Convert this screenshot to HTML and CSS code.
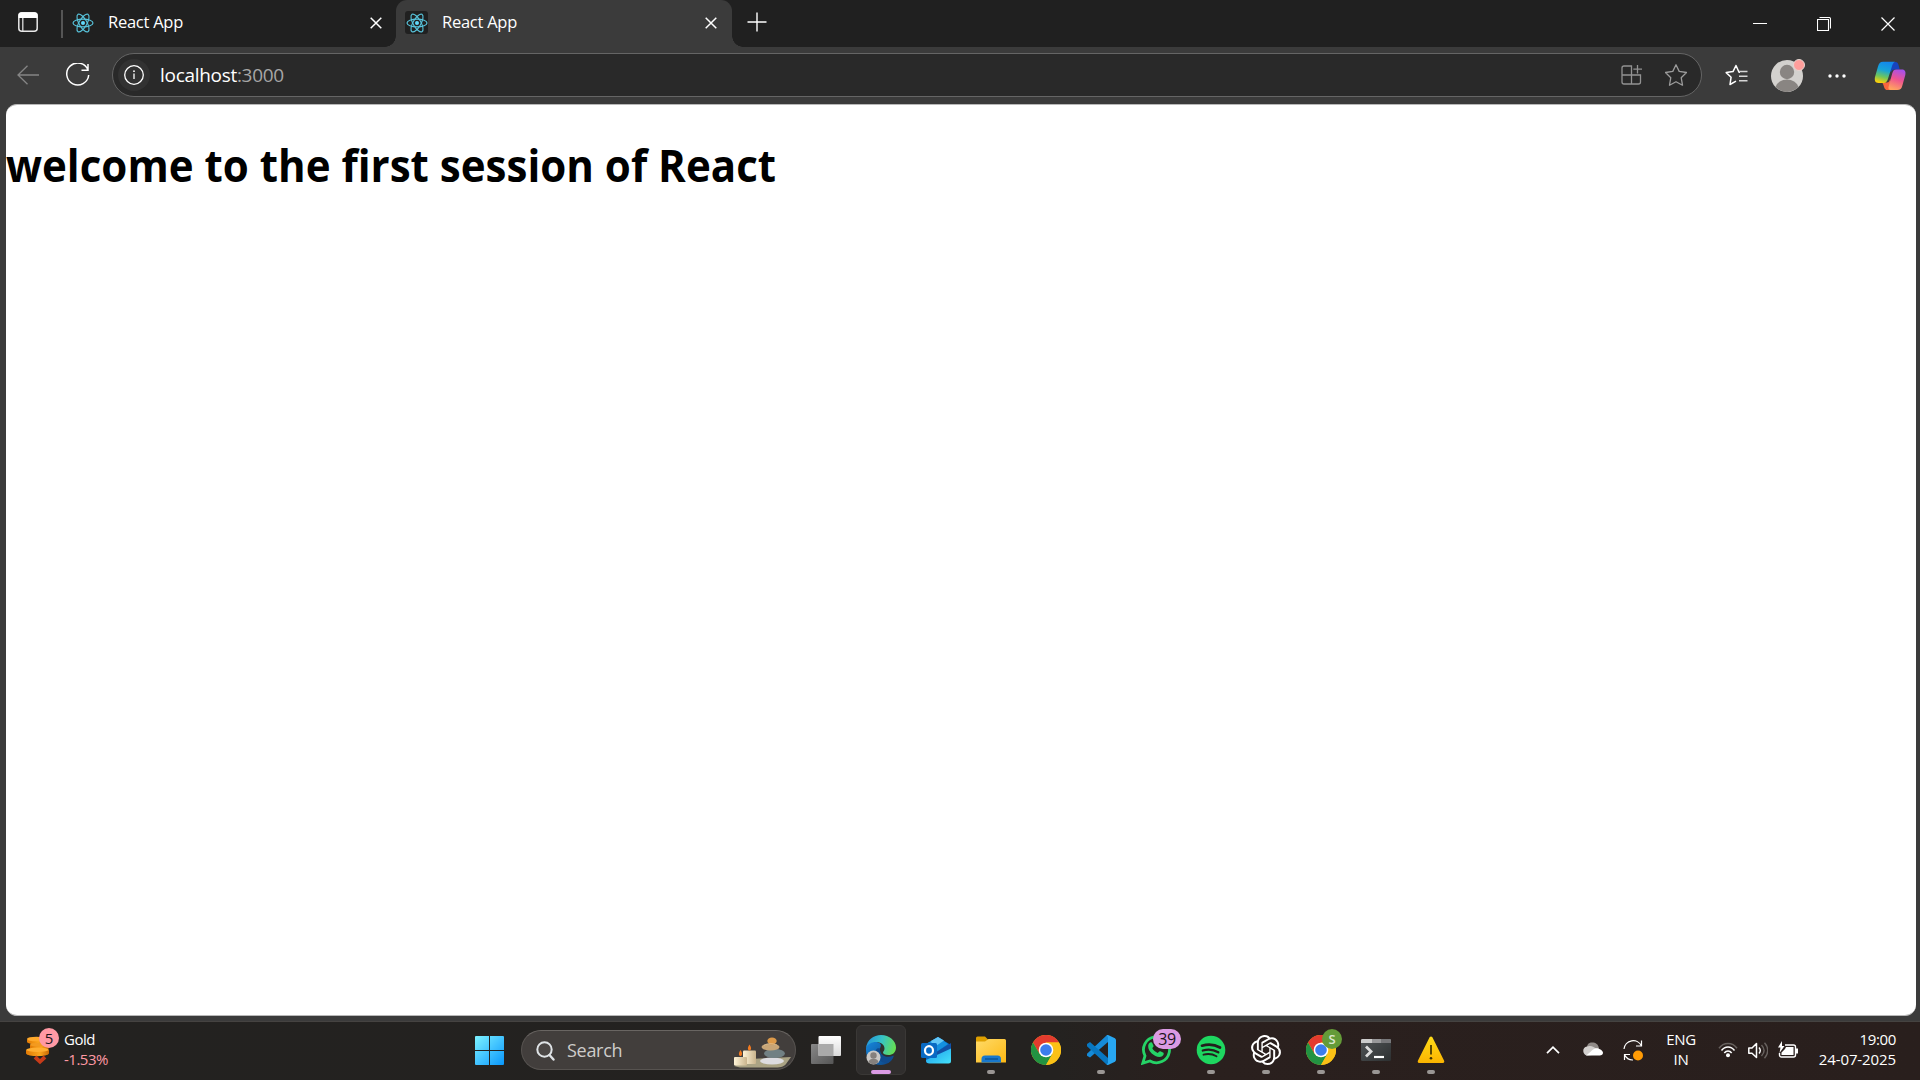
FILE: index.html
```html
<!DOCTYPE html>
<html lang="en">
<head>
<meta charset="utf-8">
<title>React App</title>
<link rel="stylesheet" href="styles.css">
</head>
<body>
<svg class="defs" width="0" height="0">
  <defs>
    <symbol id="react" viewBox="0 0 22 22">
      <g fill="none" stroke="#58c4dc" stroke-width="1.15">
        <ellipse cx="11" cy="11" rx="10" ry="3.9"/>
        <ellipse cx="11" cy="11" rx="10" ry="3.9" transform="rotate(60 11 11)"/>
        <ellipse cx="11" cy="11" rx="10" ry="3.9" transform="rotate(120 11 11)"/>
      </g>
      <circle cx="11" cy="11" r="2" fill="#61dafb"/>
    </symbol>
    <symbol id="close" viewBox="0 0 12 12"><path d="M.7.7l10.6 10.6M11.3.7L.7 11.3" fill="none" stroke="#fff" stroke-width="1.5"/></symbol>
    <symbol id="chrome" viewBox="0 0 30 30">
      <circle cx="15" cy="15" r="15" fill="#fbc116"/>
      <path d="M2 7.5A15 15 0 0 1 28 7.5H15L8.5 18.8z" fill="#e33b2e"/>
      <path d="M2 7.5A15 15 0 0 0 15 30L21.5 18.8 15 22 8.5 18.8z" fill="#229342"/>
      <path d="M28 7.5A15 15 0 0 1 15 30L21.5 18.8V11L15 7.5z" fill="#fbc116"/>
      <circle cx="15" cy="15" r="7.3" fill="#fff"/><circle cx="15" cy="15" r="5.8" fill="#3b7ded"/>
    </symbol>
    <linearGradient id="win" x2="1" y2="1"><stop stop-color="#7df3ff"/><stop offset=".5" stop-color="#43c4ff"/><stop offset="1" stop-color="#0997fb"/></linearGradient>
    <linearGradient id="edgeTop" x1="0" y1=".3" x2="1" y2=".5"><stop stop-color="#2395dd"/><stop offset=".5" stop-color="#37c3c5"/><stop offset="1" stop-color="#65de52"/></linearGradient>
    <linearGradient id="edgeBase" x2="1" y2="1"><stop stop-color="#1687dc"/><stop offset="1" stop-color="#0c4282"/></linearGradient>
    <linearGradient id="folder" x2="1" y2="1"><stop stop-color="#ffda68"/><stop offset="1" stop-color="#fdb914"/></linearGradient>
    <linearGradient id="outlook" x2="1" y2="1"><stop stop-color="#1c9bea"/><stop offset="1" stop-color="#45e2fb"/></linearGradient>
    <linearGradient id="copBlue" x1=".6" y1="0" x2=".35" y2="1"><stop stop-color="#1387ed"/><stop offset=".4" stop-color="#17a4d8"/><stop offset=".72" stop-color="#70c65b"/><stop offset="1" stop-color="#fbd00c"/></linearGradient>
    <linearGradient id="copPink" x1=".7" y1="0" x2=".4" y2="1"><stop stop-color="#a550ed"/><stop offset=".5" stop-color="#ef5490"/><stop offset="1" stop-color="#ffa260"/></linearGradient>
    <linearGradient id="gold"><stop stop-color="#e17a05"/><stop offset=".6" stop-color="#fba51d"/><stop offset="1" stop-color="#c96905"/></linearGradient>
    <linearGradient id="glass" x2="0" y2="1"><stop stop-color="#fff"/><stop offset="1" stop-color="#dadada"/></linearGradient>
    <linearGradient id="pane" x2="1" y2="1"><stop stop-color="#888"/><stop offset="1" stop-color="#555"/></linearGradient>
    <linearGradient id="warn" x2="0" y2="1"><stop stop-color="#ffdc19"/><stop offset="1" stop-color="#fbb400"/></linearGradient>
    <linearGradient id="candle"><stop stop-color="#fff4d7"/><stop offset="1" stop-color="#c9b48d"/></linearGradient>
    <linearGradient id="term" x2="1" y2="1"><stop stop-color="#525658"/><stop offset="1" stop-color="#2d3031"/></linearGradient>
  </defs>
</svg>

<div class="tabstrip">
  <svg class="workspaces" width="20" height="20" viewBox="0 0 20 20"><rect x=".8" y=".8" width="18.4" height="18.4" rx="3" fill="none" stroke="#e8e8e8" stroke-width="1.5"/><path d="M.5 6V3.5A3 3 0 0 1 3.500.5h13a3 3 0 0 1 3 3V6z" fill="#fff"/><path d="M4.800 6v13" stroke="#ddd" stroke-width="1.3"/></svg>
  <span class="divider"></span>
  <div class="tab">
    <span class="favicon"><svg width="22" height="22"><use href="#react"/></svg></span>
    <span class="tab-title">React App</span>
    <svg class="tab-close" width="12" height="12"><use href="#close"/></svg>
  </div>
  <div class="tab active">
    <span class="favicon"><svg width="22" height="22"><use href="#react"/></svg></span>
    <span class="tab-title">React App</span>
    <svg class="tab-close" width="12" height="12"><use href="#close"/></svg>
  </div>
  <svg class="new-tab" width="20" height="20"><path d="M10 .5v19M.5 10h19" stroke="#fff" stroke-width="1.4"/></svg>
  <div class="window-controls">
    <svg width="14" height="14"><path d="M0 6.500h14" stroke="#fff"/></svg>
    <svg width="14" height="14"><path d="M.5 2.500h11v11H.5zM2.500.5H12A1.500 1.500 0 0 1 13.500 2v9.500" fill="none" stroke="#fff" stroke-width="1.1"/></svg>
    <svg width="14" height="14"><path d="M.5.5l13 13M13.500.5l-13 13" stroke="#fff" stroke-width="1.2"/></svg>
  </div>
</div>

<div class="toolbar">
  <svg class="back" width="22" height="20"><path d="M22 10H1M10.500.7L1 10l9.500 9.300" fill="none" stroke="#858585" stroke-width="1.3"/></svg>
  <svg class="reload" width="24" height="24"><path d="M22 7A11 11 0 1 0 22.700 12M22 1v6.200h-6.500" fill="none" stroke="#fff" stroke-width="1.5"/></svg>
  <div class="address">
    <span class="site-info"><svg width="20" height="20"><circle cx="10" cy="10" r="9.300" fill="none" stroke="#fff" stroke-width="1.300"/><path d="M10 8.500v5.500" stroke="#fff" stroke-width="1.300"/><circle cx="10" cy="6.200" r=".9" fill="#fff"/></svg></span>
    <span class="url">localhost<span class="port">:3000</span></span>
    <svg class="apps" width="21" height="20"><path d="M10.500 10V1H3A2 2 0 0 0 1 3v14a2 2 0 0 0 2 2h14.500a2 2 0 0 0 2-2v-7zM1 10h9.500v9M16.500 0v8.500M12.300 4.200H21" fill="none" stroke="#929292" stroke-width="1.300"/></svg>
    <svg class="favorite" width="22" height="22" viewBox="0 0 22 22"><path d="M11 .8l3.200 6.600 7.300 1.100-5.300 5.200 1.300 7.500L11 17.700l-6.500 3.500 1.300-7.500L.5 8.500l7.300-1.100z" fill="none" stroke="#9c9c9c" stroke-width="1.300" stroke-linejoin="round"/></svg>
  </div>
  <svg class="favorites" width="23" height="22" viewBox="0 0 23 22"><path d="M15 8.200h-1L11 1.500 8 7.600l-6.800 1 4.900 4.600L5 20.500l6-3.300" fill="none" stroke="#fff" stroke-width="1.500" stroke-linejoin="round"/><path d="M14 7.500h8.500M14 12.300h8.500M14 16.800h8.500" stroke="#d6d6d6" stroke-width="1.500"/></svg>
  <svg class="profile" width="34" height="33" viewBox="0 0 34 33"><circle cx="16" cy="17" r="16" fill="#d3d1ce"/><path d="M4.500 28A12 10.500 0 0 1 27.500 28 16 16 0 0 1 4.500 28z" fill="#898582"/><circle cx="16" cy="13" r="7.200" fill="#898582"/><circle cx="28" cy="6" r="5.500" fill="#ff9e9b" stroke="#e5d6d2"/></svg>
  <svg class="more" width="18" height="4"><circle cx="2" cy="2" r="1.700" fill="#fff"/><circle cx="9" cy="2" r="1.700" fill="#fff"/><circle cx="16" cy="2" r="1.700" fill="#fff"/></svg>
  <svg class="copilot" width="32" height="30" viewBox="0 0 32 30"><path d="M15 1h6.500c2 0 2.600 1.500 3.200 3.500l1 4h-5c-2.400 0-3 1-4 3z" fill="#1744be"/><path d="M8 21.500h5c2 0 2.500-1.500 3.200-3.800l.5 6.800c0 3 1 4.500 4 4.500h-7.500c-2.500 0-3-2.500-3.600-4.500-.5-1.500-.8-2.200-1.600-3z" fill="#f7663d"/><path d="M9 .8h12c-1.700.7-2.500 2.700-3.200 5L14 17.800c-.8 2.700-1.800 4.200-4.200 4.200H4.500C1 22 .4 19 1 16L4 5.500C4.900 2.500 6 .8 9 .8z" fill="url(#copBlue)"/><path d="M22.500 8.500H28c3.200 0 4 2.500 3.300 5.500l-3 10.700c-.8 3-2 4.300-5 4.300h-7c-2.300 0-2-2.200-1.400-4.400l3.300-12c.7-2.500 1.500-4.100 4.300-4.100z" fill="url(#copPink)"/></svg>
</div>

<main class="page"><h1>welcome to the first session of React</h1></main>

<footer class="taskbar">
  <div class="widget">
    <div class="widget-icon">
      <svg width="24" height="30" viewBox="0 0 24 30"><path d="M1 4.500v2.500c1 3 18 3 19 0V4.500z" fill="url(#gold)"/><ellipse cx="10.500" cy="4" rx="9.500" ry="2.300" fill="#ffa92b"/><path d="M4 10v3c1 3 18 3 19 0v-3z" fill="url(#gold)"/><ellipse cx="13.500" cy="9.700" rx="9.500" ry="1.900" fill="#f39a20"/><path d="M0 15v3.500c1 3.500 22 3.500 23 0V15z" fill="url(#gold)"/><ellipse cx="11.500" cy="14.700" rx="11.300" ry="2.200" fill="#ffae31"/><path d="M9 22l5 4.700 5-4.700" fill="none" stroke="#c63b19" stroke-width="3.800"/></svg>
      <span class="badge widget-badge">5</span>
    </div>
    <div class="widget-text"><span class="commodity">Gold</span><span class="change">-1.53%</span></div>
  </div>

  <svg class="start" width="29" height="29" viewBox="0 0 29 29"><path d="M1 0h13v14H0V1a1 1 0 0 1 1-1zM15 0h13a1 1 0 0 1 1 1v13H15zM0 15h14v14H1a1 1 0 0 1-1-1zM15 15h14v13a1 1 0 0 1-1 1H15z" fill="url(#win)"/></svg>

  <div class="search">
    <svg class="lens" width="19" height="20"><circle cx="8.500" cy="8.500" r="7.200" fill="rgba(255,255,255,.05)" stroke="#dfe3e6" stroke-width="2"/><path d="M13.500 14l4 4.500" stroke="#dfe3e6" stroke-width="2.400" stroke-linecap="round"/></svg>
    <span class="search-label">Search</span>
    <svg class="scene" width="58" height="31" viewBox="0 0 58 31"><path d="M1 29L17 22l41-2-5 7c-2 3-7 3.500-12 3.500H7z" fill="#aaa384"/><rect x="10" y="13.500" width="13" height="13.500" rx="1" fill="url(#candle)"/><rect x="1" y="20" width="13" height="8.500" rx="1" fill="url(#candle)"/><path d="M16.500 7.500c3 4 1 6 0 6s-3-2 0-6zM7.500 13c3 4 1 6 0 6s-3-2 0-6z" fill="#f27a20"/><ellipse cx="39" cy="24" rx="12" ry="3.500" fill="#dddce0"/><ellipse cx="41.500" cy="16.500" rx="10.500" ry="4.500" fill="#718083"/><ellipse cx="37.500" cy="10" rx="9" ry="3.600" fill="#c7a577"/><ellipse cx="39" cy="4" rx="4.700" ry="3.500" fill="#dc9a4a"/><path d="M31 8.500c3-2.500 9-2.500 13-.5" fill="none" stroke="#e7d2ab" stroke-opacity=".5"/></svg>
  </div>

  <div class="apps-row">
    <div class="app"><svg width="30" height="28" viewBox="0 0 30 28"><rect y="8" width="22.500" height="20" rx="1" fill="url(#pane)"/><rect x="7.500" width="22.500" height="20" rx="1" fill="url(#glass)"/><path d="M7.500 8h15v12h-15z" fill="#aaa"/></svg></div>
    <div class="app current"><svg width="30" height="30" viewBox="0 0 30 30"><path d="M0 13C1 8 6 6 11 7c4 1 4.500 3 3.500 5-2.500 5 1.500 10.500 7 10.500 3 0 5-1 6-1.500C25 26.500 21 30 15 30 6 30 0 24 0 15z" fill="url(#edgeBase)"/><path d="M0 13C1 5 7.500 0 15 0c8.500 0 15 6 15 12.500 0 5-3.500 7.500-7.500 7.500-3.500 0-5.500-1-5.500-2.500 0-1 1.500-1.500 1.500-4C18.500 9.500 14.500 7 10 7 5 7 1.500 9.500 0 13z" fill="url(#edgeTop)"/><path d="M10 15c-1 8 5 13.500 12 13.300C26 26 28 22 27.500 20.500 21 24 13.500 20.500 14 13.500c-2-.5-3.500 0-4 1.500z" fill="#104b8e"/><circle cx="7.500" cy="22.500" r="7" fill="#cac8c6"/><circle cx="7.500" cy="20.500" r="3.200" fill="#85807d"/><path d="M2.500 27a5.200 4.500 0 0 1 10 0c-2.500 3-7.500 3-10 0z" fill="#85807d"/></svg></div>
    <div class="app"><svg width="30" height="28" viewBox="0 0 30 28"><path d="M5 8L17 1l12 7.500V25a2 2 0 0 1-2 2H7a2 2 0 0 1-2-2z" fill="#0867c1"/><path d="M5 8L17 1l10 7-13 9-9-4z" fill="#1490df"/><path d="M10 5l7-4 6 3.500L12 12z" fill="#62c6f6"/><path d="M14 17L30 7v7L17 23z" fill="#1150a6"/><path d="M30 12.500V25a2.500 2.500 0 0 1-2.500 2.500h-19A3.500 3.500 0 0 1 5 24z" fill="url(#outlook)"/><rect y="7" width="16" height="15" rx="1.500" fill="#096ac4"/><ellipse cx="8" cy="14.500" rx="4" ry="4.400" fill="none" stroke="#fff" stroke-width="2.200"/></svg></div>
    <div class="app open"><svg width="30" height="28" viewBox="0 0 30 28"><path d="M0 8V2a1.500 1.500 0 0 1 1.500-1.500H9L12.500 4v6z" fill="#dfa000"/><path d="M0 5.500h9L12.500 3H28.500A1.500 1.500 0 0 1 30 4.500v22H0z" fill="url(#folder)"/><path d="M5.500 26.500V23A3.500 3.500 0 0 1 9 19.500h12.500A3.500 3.500 0 0 1 25 23v3.500z" fill="#1878cc"/><path d="M9 23h13" stroke="#074f92" stroke-width="1.300"/></svg></div>
    <div class="app"><svg width="30" height="30"><use href="#chrome"/></svg></div>
    <div class="app open"><svg width="30" height="30" viewBox="0 0 30 30"><path d="M22 7L4 22.500 1 20.700v-2L20.500.5 22 0z" fill="#168bd8"/><path d="M22 23L4 7 1 9v2.200L20.500 29.500 22 30z" fill="#0877c1"/><path d="M20.500.3L22 0l7 3.300 1 1.500v20.400l-1 1.500L22 30l-1.500-.5L22 28V2z" fill="#28a7f2"/></svg></div>
    <div class="app"><svg width="30" height="30" viewBox="0 0 30 30"><path d="M1.800 28.200L4 20.800A13 13 0 1 1 9 26z" fill="none" stroke="#25d366" stroke-width="2.800"/><path d="M8.500 8c1.200-1.300 2.500-.8 3 .5l1 2.200c.4 1-.9 1.800-1.300 2.400 1.200 2.400 3.200 4 5.500 4.900 1-.8 1.500-2.200 2.700-1.700l2.600 1.200c1.500.8.4 3-.8 3.700-5 3-14.500-4-14-10.200.1-1.300.5-2.200 1.300-3z" fill="#25d366"/></svg><span class="badge chat-badge">39</span></div>
    <div class="app open"><svg width="30" height="30" viewBox="0 0 30 30"><circle cx="15" cy="15" r="14.300" fill="#1ed760"/><g fill="none" stroke="#231f1d" stroke-linecap="round"><path d="M6 10.700c5.500-1.700 12.800-1.200 18 1.800" stroke-width="2.700"/><path d="M6.800 15.500c5-1.500 11-.9 15.500 1.800" stroke-width="2.300"/><path d="M7.500 19.700c4.500-1.200 9-.7 13 1.600" stroke-width="1.900"/></g></svg></div>
    <div class="app open"><svg width="30" height="30" viewBox="0 0 24 24"><path fill="#fff" d="M22.2819 9.8211a5.9847 5.9847 0 0 0-.5157-4.9108 6.0462 6.0462 0 0 0-6.5098-2.9A6.0651 6.0651 0 0 0 4.9807 4.1818a5.9847 5.9847 0 0 0-3.9977 2.9 6.0462 6.0462 0 0 0 .7427 7.0966 5.98 5.98 0 0 0 .511 4.9107 6.051 6.051 0 0 0 6.5146 2.9001A5.9847 5.9847 0 0 0 13.2599 24a6.0557 6.0557 0 0 0 5.7718-4.2058 5.9894 5.9894 0 0 0 3.9977-2.9001 6.0557 6.0557 0 0 0-.7475-7.0729zm-9.022 12.6081a4.4755 4.4755 0 0 1-2.8764-1.0408l.1419-.0804 4.7783-2.7582a.7948.7948 0 0 0 .3927-.6813v-6.7369l2.02 1.1686a.071.071 0 0 1 .038.052v5.5826a4.504 4.504 0 0 1-4.4945 4.4944zm-9.6607-4.1254a4.4708 4.4708 0 0 1-.5346-3.0137l.142.0852 4.783 2.7582a.7712.7712 0 0 0 .7806 0l5.8428-3.3685v2.3324a.0804.0804 0 0 1-.0332.0615L9.74 19.9502a4.4992 4.4992 0 0 1-6.1408-1.6464zM2.3408 7.8956a4.485 4.485 0 0 1 2.3655-1.9728V11.6a.7664.7664 0 0 0 .3879.6765l5.8144 3.3543-2.0201 1.1685a.0757.0757 0 0 1-.071 0l-4.8303-2.7865A4.504 4.504 0 0 1 2.3408 7.872zm16.5963 3.8558L13.1038 8.364 15.1192 7.2a.0757.0757 0 0 1 .071 0l4.8303 2.7913a4.4944 4.4944 0 0 1-.6765 8.1042v-5.6772a.79.79 0 0 0-.407-.667zm2.0107-3.0231l-.142-.0852-4.7735-2.7818a.7759.7759 0 0 0-.7854 0L9.409 9.2297V6.8974a.0662.0662 0 0 1 .0284-.0615l4.8303-2.7866a4.4992 4.4992 0 0 1 6.6802 4.66zM8.3065 12.863l-2.02-1.1638a.0804.0804 0 0 1-.038-.0567V6.0742a4.4992 4.4992 0 0 1 7.3757-3.4537l-.142.0805L8.704 5.459a.7948.7948 0 0 0-.3927.6813zm1.0976-2.3654l2.602-1.4998 2.6069 1.4998v2.9994l-2.5974 1.4997-2.6067-1.4997Z"/></svg></div>
    <div class="app open"><svg width="30" height="30"><use href="#chrome"/></svg><span class="badge profile-badge">S</span></div>
    <div class="app open"><svg width="30" height="22" viewBox="0 0 30 22"><rect width="30" height="22" rx="1.500" fill="url(#term)"/><path d="M1.500 0h27A1.500 1.500 0 0 1 30 1.500V4H0V1.500A1.500 1.500 0 0 1 1.500 0z" fill="#98989a"/><path d="M0 1.500A1.500 1.500 0 0 1 1.500 0H11v4H0z" fill="#ccc"/><path d="M20 0h8.500A1.500 1.500 0 0 1 30 1.500V4H20z" fill="#77777a"/><path d="M5 7.500l5 5-5 5" fill="none" stroke="#ddd" stroke-width="2.800"/><path d="M13 18h10" stroke="#fff" stroke-width="2.200"/></svg></div>
    <div class="app open"><svg width="28" height="28" viewBox="0 0 28 28"><path d="M12.500 1.500q1.500-2 3 0L27 24.500q1 2.500-1.500 2.500h-23Q0 27 1 24.500z" fill="url(#warn)"/><path d="M14 9v9.500" stroke="#3e3200" stroke-width="1.700"/><circle cx="14" cy="22.200" r="1.300" fill="#3e3200"/></svg></div>
  </div>

  <div class="tray">
    <svg class="chevron" width="14" height="8"><path d="M1 7.200l6-6 6 6" fill="none" stroke="#fff" stroke-width="1.700"/></svg>
    <svg class="cloud" width="20" height="14" viewBox="0 0 20 14"><path d="M4 9C3 3 5.500.5 9 .5c4 0 6 2 6.800 5L16 10z" fill="#918b88"/><path d="M3.500 13.500C-1 12-.8 5 4 4.500 8 3 11 5 14 7l-5 6z" fill="#d3d0ce"/><path d="M3 13.300c3-1 6-6.300 10-7 3-.5 7 2.200 7 4.500 0 1.700-1.500 2.700-3.200 2.700H4z" fill="#fff"/></svg>
    <svg class="sync" width="20" height="21" viewBox="0 0 20 21"><path d="M1 9A9.200 9.200 0 0 1 18.500 6M18.500.5V6H13M1.500 20v-5.500H7M1.500 14.500A9 9 0 0 0 10 20" fill="none" stroke="#fff" stroke-width="1.200"/><circle cx="15" cy="15.500" r="5" fill="#ff9b05"/></svg>
    <div class="language"><span>ENG</span><span>IN</span></div>
    <svg class="wifi" width="20" height="16" viewBox="0 0 20 16"><path d="M1 6.200C5.500-.2 14.500-.2 19 6.200" fill="none" stroke="#67615e" stroke-width="1.500"/><path d="M3.500 8.500c3.500-4.700 9.500-4.700 13 0M6.300 11c2-2.700 5.400-2.700 7.400 0" fill="none" stroke="#fff" stroke-width="1.500"/><circle cx="10" cy="13.300" r="2" fill="#fff"/></svg>
    <svg class="volume" width="20" height="17" viewBox="0 0 20 17"><path d="M.8 6H4L8.500 1.500v14L4 11.300H.8z" fill="none" stroke="#fff" stroke-width="1.500" stroke-linejoin="round"/><path d="M11 5.500c1.700 2 1.700 4 0 6" fill="none" stroke="#fff" stroke-width="1.400"/><path d="M13.500 3c3.300 3.500 3.300 7.500 0 11M16.500.8c4.300 4.700 4.300 10.700 0 15.400" fill="none" stroke="#67615e" stroke-width="1.400"/></svg>
    <svg class="battery" width="21" height="17" viewBox="0 0 21 17"><path d="M7 4h8.500a2 2 0 0 1 2 2v8a2 2 0 0 1-2 2H3.500a2 2 0 0 1-2-2v-2" fill="none" stroke="#fff" stroke-width="1.400"/><path d="M8 6h7.500v8h-12v-2.500L7 8zM18 7.500h2v5h-2z" fill="#fff"/><path d="M4 0L0 6.500h2.500L1.500 12 6.500 5H4z" fill="#fff"/></svg>
    <div class="clock"><span class="time">19:00</span><span class="date">24-07-2025</span></div>
  </div>
</footer>
</body>
</html>
```
FILE: styles.css
```css
* { box-sizing: border-box; }
body {
  margin: 0;
  width: 1920px;
  height: 1080px;
  overflow: hidden;
  display: flex;
  flex-direction: column;
  background: #3b3b3b;
  color: #fff;
  font-family: "Open Sans", "Noto Sans", sans-serif;
}
svg { display: block; flex: none; }
.defs { position: absolute; }

.tabstrip { height: 47px; flex: none; display: flex; background: #202020; }
.workspaces { margin: 12px 0 0 18px; }
.divider { width: 2px; height: 28px; margin: 10px 0 0 23px; background: #555; }
.tab { position: relative; display: flex; height: 48px; width: 336px; padding: 11px 15px 0 9px; }
.tab:not(.active) { width: 333px; padding: 11px 14px 0 8px; }
.tab.active { background: #3b3b3b; border-radius: 11px 11px 0 0; }
.tab.active::before, .tab.active::after {
  content: "";
  position: absolute;
  bottom: 1px;
  width: 11px;
  height: 11px;
}
.tab.active::before { left: -11px; background: radial-gradient(circle at 0 0, transparent 10.5px, #3b3b3b 11px); }
.tab.active::after { right: -11px; background: radial-gradient(circle at 100% 0, transparent 10.5px, #3b3b3b 11px); }
.favicon { width: 23px; height: 23px; border-radius: 3px; background: #202020; display: grid; place-items: center; }
.tab-title { margin-left: 14px; font-size: 16.5px; line-height: 22px; letter-spacing: -.25px; white-space: nowrap; flex: 1; }
.tab-close { margin-top: 6px; }
.new-tab { margin: 12px 0 0 15px; }
.window-controls { display: flex; gap: 50px; margin: 17px 25px 0 auto; }

.toolbar { height: 57px; flex: none; display: flex; align-items: center; padding: 0 14px 1px 17px; }
.reload { margin-left: 27px; }
.address {
  display: flex;
  align-items: center;
  width: 1590px;
  height: 44px;
  margin-left: 22px;
  padding: 0 14px 0 5px;
  background: #292929;
  border: 1px solid #656565;
  border-radius: 22px;
}
.site-info { width: 32px; height: 32px; border-radius: 50%; background: #323232; display: grid; place-items: center; }
.url { margin-left: 10px; font-size: 19px; line-height: 24px; letter-spacing: -.3px; flex: 1; }
.port { color: #a6a6a6; }
.favorite { margin-left: 23px; }
.favorites { margin-left: 23px; }
.profile { margin-left: 23px; }
.more { margin: 2px 0 0 23px; }
.copilot { margin: 1px 0 0 28px; }

.page {
  width: 1910px;
  height: 912px;
  flex: none;
  margin-left: 6px;
  overflow: hidden;
  background: #fff;
  border: solid #b8b8b8;
  border-width: 1px 0;
  border-radius: 11px;
  color: #000;
}
.page h1 {
  width: max-content;
  margin: 28px 0 0;
  font-size: 45px;
  line-height: 64px;
  font-weight: 700;
  white-space: nowrap;
  transform: scaleX(.935);
  transform-origin: left;
}

.taskbar {
  display: flex;
  height: 59px;
  flex: none;
  margin-top: 5px;
  border-top: 1px solid #454341;
  background: linear-gradient(90deg, #232220 0, #242220 55%, #2a201e 62%, #291f1d 100%);
}
.widget { display: flex; width: 475px; padding: 13px 0 0 26px; }
.widget-icon { position: relative; width: 24px; height: 30px; }
.badge { position: absolute; display: grid; place-items: center; color: #1d151b; }
.widget-badge { left: 13px; top: -7px; width: 20px; height: 20px; border-radius: 50%; background: #ff99a4; font-size: 15px; line-height: 20px; }
.widget-text { display: flex; flex-direction: column; margin: -6px 0 0 14px; font-size: 15px; line-height: 20px; letter-spacing: -.5px; }
.change { color: #ff99a4; }
.start { margin-top: 14px; }
.search {
  display: flex;
  width: 275px;
  height: 40px;
  margin: 8px 0 0 17px;
  padding: 0 4px 0 14px;
  border: 1px solid #575350;
  border-top-color: #696562;
  border-radius: 20px;
  background: #423e3c;
}
.lens { margin-top: 10px; }
.search-label { flex: 1; margin-left: 12px; font-size: 18px; line-height: 39px; letter-spacing: -.3px; color: #ceccca; }
.scene { margin-top: 6px; }
.apps-row { display: flex; margin-left: 2px; }
.app { position: relative; display: grid; place-items: center; width: 50px; height: 50px; margin: 3px 2px 0 3px; border: 1px solid transparent; border-radius: 6px; }
.app.current { background: #302e2d; border-color: #3a3836; }
.app.open::after, .app.current::after {
  content: "";
  position: absolute;
  left: 20px;
  bottom: 0;
  width: 8px;
  height: 4px;
  border-radius: 2px;
  background: #9a9694;
}
.app.current::after { left: 14px; width: 20px; background: #db9be4; }
.chat-badge { left: 21px; top: 3px; width: 28px; height: 20px; border-radius: 10px; background: #db9be4; font-size: 16px; line-height: 20px; letter-spacing: -.5px; }
.profile-badge { left: 25px; top: 3px; width: 20px; height: 20px; border-radius: 50%; background: #649b38; color: #dce8d0; font-size: 13px; font-weight: 600; }

.tray { display: flex; margin-left: auto; padding-right: 24px; }
.chevron { margin-top: 24px; }
.cloud { margin: 20px 0 0 23px; }
.sync { margin: 18px 0 0 20px; }
.language { display: flex; flex-direction: column; align-items: center; width: 36px; margin: 7px 0 0 20px; font-size: 15px; line-height: 20px; letter-spacing: -.3px; }
.wifi { margin: 20px 0 0 19px; }
.volume { margin: 20px 0 0 10px; }
.battery { margin: 19px 0 0 10px; }
.clock { display: flex; flex-direction: column; align-items: flex-end; width: 97px; margin-top: 7px; font-size: 15px; line-height: 20px; letter-spacing: -.1px; }
.time { letter-spacing: -.35px; }
```
